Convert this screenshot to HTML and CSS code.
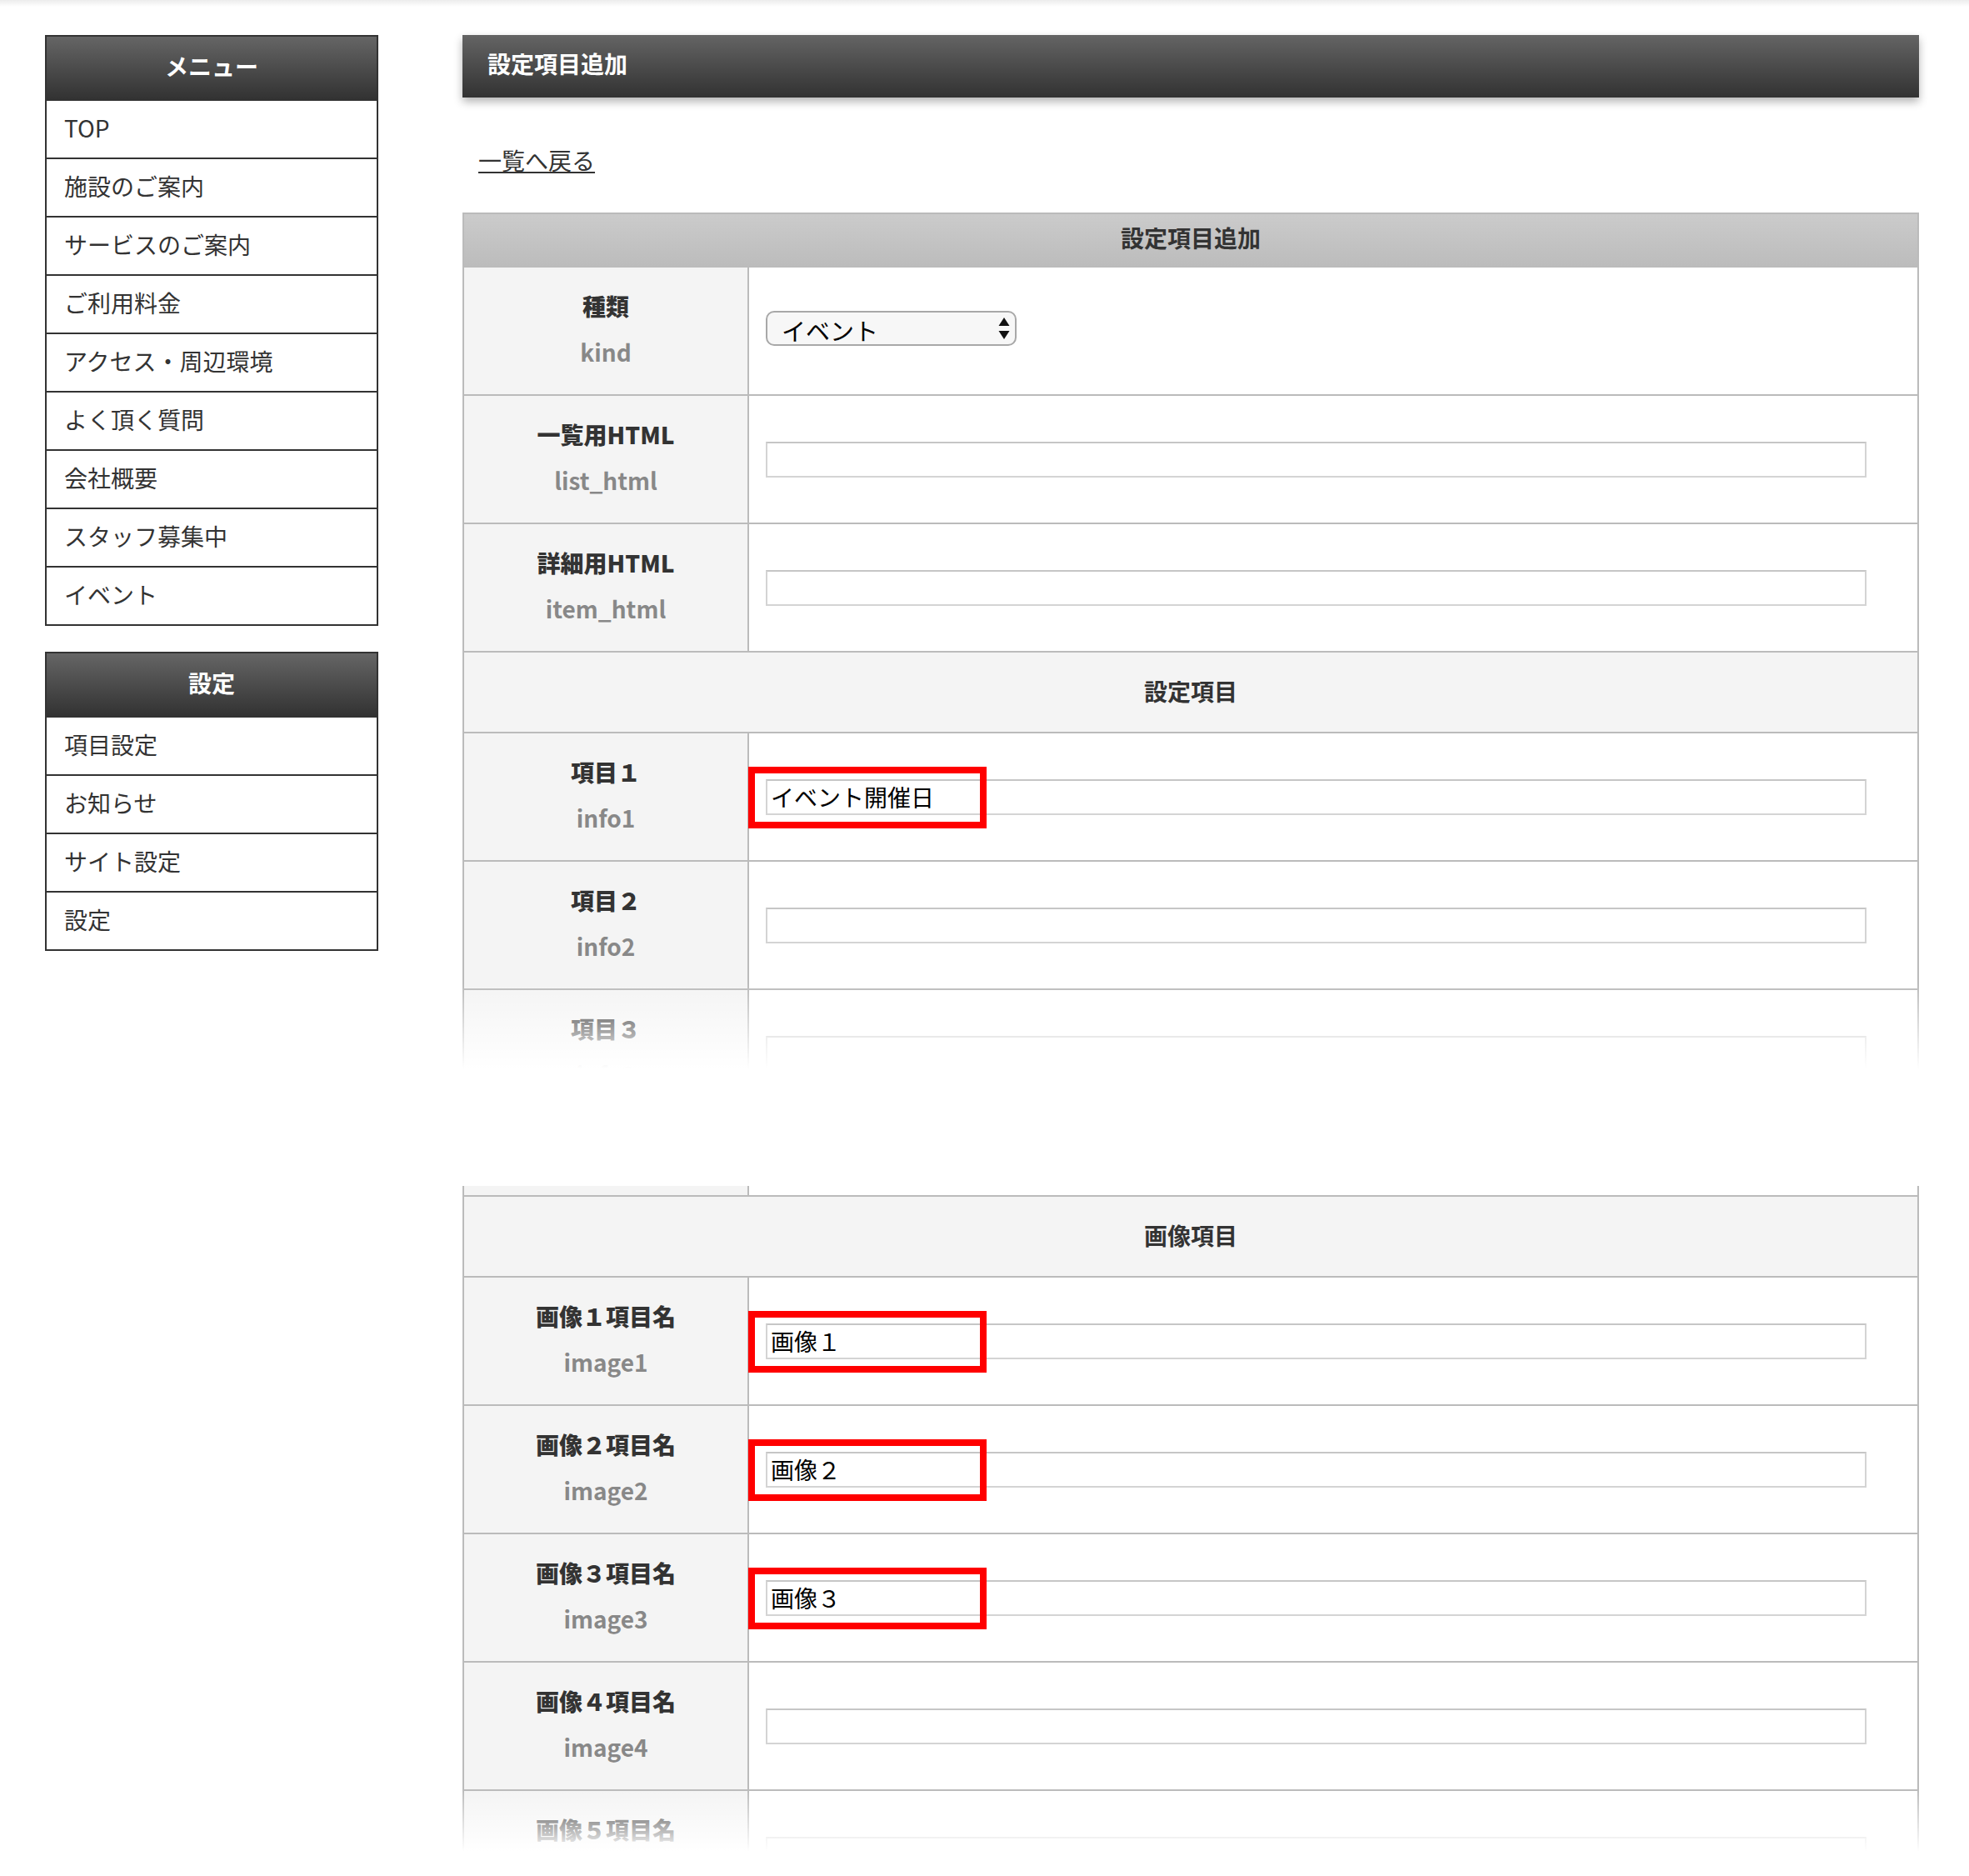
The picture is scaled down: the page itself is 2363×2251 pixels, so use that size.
FILE: index.html
```html
<!DOCTYPE html>
<html lang="ja">
<head>
    <meta charset="UTF-8">
    <meta name="viewport" content="width=device-width, initial-scale=1.0">
    <title>設定項目追加</title>
    <link rel="stylesheet" href="styles.css">
</head>
<body>
    <div class="wrapper">
        <aside class="sidebar">
            <div class="side-box">
                <h2 class="side-title">メニュー</h2>
                <ul class="side-list">
                    <li><a href="#">TOP</a></li>
                    <li><a href="#">施設のご案内</a></li>
                    <li><a href="#">サービスのご案内</a></li>
                    <li><a href="#">ご利用料金</a></li>
                    <li><a href="#">アクセス・周辺環境</a></li>
                    <li><a href="#">よく頂く質問</a></li>
                    <li><a href="#">会社概要</a></li>
                    <li><a href="#">スタッフ募集中</a></li>
                    <li><a href="#">イベント</a></li>
                </ul>
            </div>
            <div class="side-box">
                <h2 class="side-title">設定</h2>
                <ul class="side-list">
                    <li><a href="#">項目設定</a></li>
                    <li><a href="#">お知らせ</a></li>
                    <li><a href="#">サイト設定</a></li>
                    <li><a href="#">設定</a></li>
                </ul>
            </div>
        </aside>

        <main class="content">
            <h1 class="page-title">設定項目追加</h1>
            <p class="back"><a href="#">一覧へ戻る</a></p>

            <!-- upper part of the form, faded out at the bottom -->
            <div class="sheet sheet-top">
                <div class="sheet-head">設定項目追加</div>
                <div class="row">
                    <div class="row-label"><strong>種類</strong><span>kind</span></div>
                    <div class="row-field">
                        <div class="select">
                            <select name="kind">
                                <option>イベント</option>
                            </select>
                            <svg class="select-arrows" width="14" height="26" viewBox="0 0 14 26"><path d="M7 0 L13.5 10 H0.5 Z M7 26 L13.5 16 H0.5 Z" fill="#111"/></svg>
                        </div>
                    </div>
                </div>
                <div class="row">
                    <div class="row-label"><strong>一覧用HTML</strong><span>list_html</span></div>
                    <div class="row-field"><input type="text" name="list_html"></div>
                </div>
                <div class="row">
                    <div class="row-label"><strong>詳細用HTML</strong><span>item_html</span></div>
                    <div class="row-field"><input type="text" name="item_html"></div>
                </div>
                <div class="row-section">設定項目</div>
                <div class="row">
                    <div class="row-label"><strong>項目１</strong><span>info1</span></div>
                    <div class="row-field">
                        <input type="text" name="info1" value="イベント開催日">
                        <span class="mark"></span>
                    </div>
                </div>
                <div class="row">
                    <div class="row-label"><strong>項目２</strong><span>info2</span></div>
                    <div class="row-field"><input type="text" name="info2"></div>
                </div>
                <div class="row">
                    <div class="row-label"><strong>項目３</strong><span>info3</span></div>
                    <div class="row-field"><input type="text" name="info3"></div>
                </div>
            </div>

            <!-- lower part of the form -->
            <div class="sheet sheet-bottom">
                <div class="row row-stub">
                    <div class="row-label"></div>
                    <div class="row-field"></div>
                </div>
                <div class="row-section">画像項目</div>
                <div class="row">
                    <div class="row-label"><strong>画像１項目名</strong><span>image1</span></div>
                    <div class="row-field">
                        <input type="text" name="image1" value="画像１">
                        <span class="mark"></span>
                    </div>
                </div>
                <div class="row">
                    <div class="row-label"><strong>画像２項目名</strong><span>image2</span></div>
                    <div class="row-field">
                        <input type="text" name="image2" value="画像２">
                        <span class="mark"></span>
                    </div>
                </div>
                <div class="row">
                    <div class="row-label"><strong>画像３項目名</strong><span>image3</span></div>
                    <div class="row-field">
                        <input type="text" name="image3" value="画像３">
                        <span class="mark"></span>
                    </div>
                </div>
                <div class="row">
                    <div class="row-label"><strong>画像４項目名</strong><span>image4</span></div>
                    <div class="row-field"><input type="text" name="image4"></div>
                </div>
                <div class="row">
                    <div class="row-label"><strong>画像５項目名</strong><span>image5</span></div>
                    <div class="row-field"><input type="text" name="image5"></div>
                </div>
            </div>
        </main>
    </div>
</body>
</html>
```

FILE: styles.css
```css
* {
    box-sizing: border-box;
}
html, body {
    margin: 0;
}
body {
    font-family: "Noto Sans CJK JP", "Noto Sans", sans-serif;
    font-size: 28px;
    color: #333;
    background: #fff linear-gradient(#ececec, #fff 8px) no-repeat;
}
.wrapper {
    display: flex;
    align-items: flex-start;
    gap: 101px;
    padding: 42px 0 0 54px;
}

/* sidebar */
.sidebar {
    width: 400px;
    flex: none;
    display: flex;
    flex-direction: column;
    gap: 31px;
}
.side-box {
    border: 2px solid #333;
    border-bottom: none;
}
.side-title {
    margin: 0;
    height: 77px;
    line-height: 70px;
    text-align: center;
    font-size: 28px;
    font-weight: bold;
    color: #fff;
    background: linear-gradient(#656565, #313131);
}
.side-list {
    list-style: none;
    margin: 0;
    padding: 0;
}
.side-list li {
    border-bottom: 2px solid #333;
}
.side-list a {
    display: block;
    height: 68px;
    line-height: 64px;
    padding-left: 21px;
    color: #333;
    text-decoration: none;
}

/* main */
.content {
    width: 1748px;
    flex: none;
}
.page-title {
    margin: 0;
    height: 75px;
    line-height: 69px;
    padding-left: 30px;
    font-size: 28px;
    font-weight: bold;
    color: #fff;
    background: linear-gradient(#646464, #323232);
    box-shadow: 0 5px 10px rgba(0, 0, 0, 0.3);
}
.back {
    margin: 0;
    height: 138px;
    padding: 55px 0 0 19px;
    line-height: 40px;
}
.back a {
    color: #333;
    text-decoration: underline;
}

.sheet {
    position: relative;
    overflow: hidden;
}
.sheet::after {
    content: "";
    position: absolute;
    left: 0;
    right: 0;
    bottom: 0;
}
.sheet-top {
    height: 1060px;
}
.sheet-top::after {
    height: 135px;
    background: linear-gradient(rgba(255, 255, 255, 0), #fff 76%);
}
.sheet-bottom {
    margin-top: 108px;
    height: 828px;
}
.sheet-bottom::after {
    height: 104px;
    background: linear-gradient(rgba(255, 255, 255, 0), #fff 72%);
}

.sheet-head {
    height: 66px;
    line-height: 56px;
    text-align: center;
    font-weight: bold;
    border: 2px solid #bbb;
    background: linear-gradient(#cbcbcb, #bcbcbc);
}
.row {
    display: grid;
    grid-template-columns: 342px 1fr;
    height: 154px;
    border: 2px solid #bbb;
    border-top: none;
}
.row-stub {
    height: 13px;
}
.row-label {
    display: flex;
    flex-direction: column;
    justify-content: center;
    align-items: center;
    padding-bottom: 5px;
    line-height: 55px;
    font-weight: bold;
    background: #f4f4f4;
    border-right: 2px solid #bbb;
}
.row-label span {
    color: #888;
}
.row-field {
    position: relative;
    display: flex;
    align-items: center;
    padding: 0 61px 0 20px;
    background: #fff;
}
.row-field input {
    width: 100%;
    height: 43px;
    padding: 0 4px;
    font-family: inherit;
    font-size: 28px;
    color: #000;
    border: 2px solid #d4d4d4;
    border-top-color: #c6c6c6;
    background: #fff;
}
.row-section {
    height: 97px;
    line-height: 92px;
    text-align: center;
    font-weight: bold;
    background: #f4f4f4;
    border: 2px solid #bbb;
    border-top: none;
}

.select {
    position: relative;
    width: 301px;
    height: 42px;
    margin-top: -7px;
}
.select select {
    -webkit-appearance: none;
    appearance: none;
    width: 100%;
    height: 100%;
    padding: 0 17px;
    font-family: inherit;
    font-size: 29px;
    color: #000;
    border: 2px solid #a8a8a8;
    border-radius: 10px;
    background: #f7f7f7;
}
.select-arrows {
    position: absolute;
    right: 8px;
    top: 8px;
    pointer-events: none;
}

/* red annotation frame */
.mark {
    position: absolute;
    left: -1px;
    top: 50%;
    margin-top: -36px;
    width: 286px;
    height: 74px;
    border: 8px solid #f00;
    pointer-events: none;
}
```
